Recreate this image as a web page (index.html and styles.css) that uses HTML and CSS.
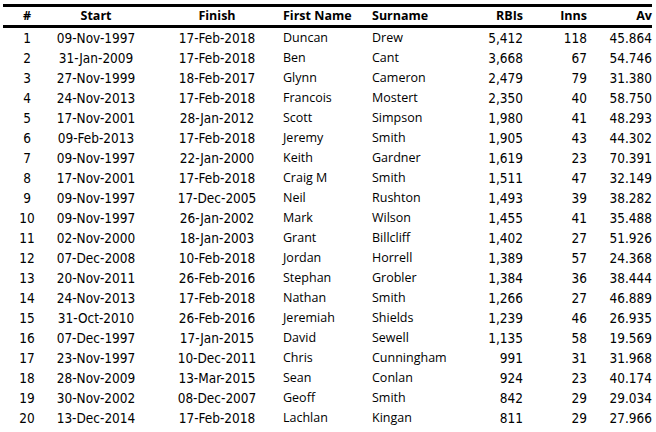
FILE: index.html
```html
<!DOCTYPE html>
<html>
<head>
<meta charset="utf-8">
<link rel="stylesheet" href="styles.css">
</head>
<body>
<table class="stats">
<colgroup>
<col class="c-rank"><col class="c-start"><col class="c-finish"><col class="c-first"><col class="c-sur"><col class="c-rbi"><col class="c-inns"><col class="c-av">
</colgroup>
<thead>
<tr><th class="ctr">#</th><th class="ctr">Start</th><th class="ctr fin">Finish</th><th class="lft">First Name</th><th class="lft">Surname</th><th class="rgt">RBIs</th><th class="rgt">Inns</th><th class="rgt last">Av</th></tr>
</thead>
<tbody>
<tr><td class="ctr num">1</td><td class="ctr num">09-Nov-1997</td><td class="ctr fin num">17-Feb-2018</td><td class="lft">Duncan</td><td class="lft">Drew</td><td class="rgt num">5,412</td><td class="rgt num">118</td><td class="rgt num last">45.864</td></tr>
<tr><td class="ctr num">2</td><td class="ctr num">31-Jan-2009</td><td class="ctr fin num">17-Feb-2018</td><td class="lft">Ben</td><td class="lft">Cant</td><td class="rgt num">3,668</td><td class="rgt num">67</td><td class="rgt num last">54.746</td></tr>
<tr><td class="ctr num">3</td><td class="ctr num">27-Nov-1999</td><td class="ctr fin num">18-Feb-2017</td><td class="lft">Glynn</td><td class="lft">Cameron</td><td class="rgt num">2,479</td><td class="rgt num">79</td><td class="rgt num last">31.380</td></tr>
<tr><td class="ctr num">4</td><td class="ctr num">24-Nov-2013</td><td class="ctr fin num">17-Feb-2018</td><td class="lft">Francois</td><td class="lft">Mostert</td><td class="rgt num">2,350</td><td class="rgt num">40</td><td class="rgt num last">58.750</td></tr>
<tr><td class="ctr num">5</td><td class="ctr num">17-Nov-2001</td><td class="ctr fin num">28-Jan-2012</td><td class="lft">Scott</td><td class="lft">Simpson</td><td class="rgt num">1,980</td><td class="rgt num">41</td><td class="rgt num last">48.293</td></tr>
<tr><td class="ctr num">6</td><td class="ctr num">09-Feb-2013</td><td class="ctr fin num">17-Feb-2018</td><td class="lft">Jeremy</td><td class="lft">Smith</td><td class="rgt num">1,905</td><td class="rgt num">43</td><td class="rgt num last">44.302</td></tr>
<tr><td class="ctr num">7</td><td class="ctr num">09-Nov-1997</td><td class="ctr fin num">22-Jan-2000</td><td class="lft">Keith</td><td class="lft">Gardner</td><td class="rgt num">1,619</td><td class="rgt num">23</td><td class="rgt num last">70.391</td></tr>
<tr><td class="ctr num">8</td><td class="ctr num">17-Nov-2001</td><td class="ctr fin num">17-Feb-2018</td><td class="lft">Craig M</td><td class="lft">Smith</td><td class="rgt num">1,511</td><td class="rgt num">47</td><td class="rgt num last">32.149</td></tr>
<tr><td class="ctr num">9</td><td class="ctr num">09-Nov-1997</td><td class="ctr fin num">17-Dec-2005</td><td class="lft">Neil</td><td class="lft">Rushton</td><td class="rgt num">1,493</td><td class="rgt num">39</td><td class="rgt num last">38.282</td></tr>
<tr><td class="ctr num">10</td><td class="ctr num">09-Nov-1997</td><td class="ctr fin num">26-Jan-2002</td><td class="lft">Mark</td><td class="lft">Wilson</td><td class="rgt num">1,455</td><td class="rgt num">41</td><td class="rgt num last">35.488</td></tr>
<tr><td class="ctr num">11</td><td class="ctr num">02-Nov-2000</td><td class="ctr fin num">18-Jan-2003</td><td class="lft">Grant</td><td class="lft">Billcliff</td><td class="rgt num">1,402</td><td class="rgt num">27</td><td class="rgt num last">51.926</td></tr>
<tr><td class="ctr num">12</td><td class="ctr num">07-Dec-2008</td><td class="ctr fin num">10-Feb-2018</td><td class="lft">Jordan</td><td class="lft">Horrell</td><td class="rgt num">1,389</td><td class="rgt num">57</td><td class="rgt num last">24.368</td></tr>
<tr><td class="ctr num">13</td><td class="ctr num">20-Nov-2011</td><td class="ctr fin num">26-Feb-2016</td><td class="lft">Stephan</td><td class="lft">Grobler</td><td class="rgt num">1,384</td><td class="rgt num">36</td><td class="rgt num last">38.444</td></tr>
<tr><td class="ctr num">14</td><td class="ctr num">24-Nov-2013</td><td class="ctr fin num">17-Feb-2018</td><td class="lft">Nathan</td><td class="lft">Smith</td><td class="rgt num">1,266</td><td class="rgt num">27</td><td class="rgt num last">46.889</td></tr>
<tr><td class="ctr num">15</td><td class="ctr num">31-Oct-2010</td><td class="ctr fin num">26-Feb-2016</td><td class="lft">Jeremiah</td><td class="lft">Shields</td><td class="rgt num">1,239</td><td class="rgt num">46</td><td class="rgt num last">26.935</td></tr>
<tr><td class="ctr num">16</td><td class="ctr num">07-Dec-1997</td><td class="ctr fin num">17-Jan-2015</td><td class="lft">David</td><td class="lft">Sewell</td><td class="rgt num">1,135</td><td class="rgt num">58</td><td class="rgt num last">19.569</td></tr>
<tr><td class="ctr num">17</td><td class="ctr num">23-Nov-1997</td><td class="ctr fin num">10-Dec-2011</td><td class="lft">Chris</td><td class="lft">Cunningham</td><td class="rgt num">991</td><td class="rgt num">31</td><td class="rgt num last">31.968</td></tr>
<tr><td class="ctr num">18</td><td class="ctr num">28-Nov-2009</td><td class="ctr fin num">13-Mar-2015</td><td class="lft">Sean</td><td class="lft">Conlan</td><td class="rgt num">924</td><td class="rgt num">23</td><td class="rgt num last">40.174</td></tr>
<tr><td class="ctr num">19</td><td class="ctr num">30-Nov-2002</td><td class="ctr fin num">08-Dec-2007</td><td class="lft">Geoff</td><td class="lft">Smith</td><td class="rgt num">842</td><td class="rgt num">29</td><td class="rgt num last">29.034</td></tr>
<tr><td class="ctr num">20</td><td class="ctr num">13-Dec-2014</td><td class="ctr fin num">17-Feb-2018</td><td class="lft">Lachlan</td><td class="lft">Kingan</td><td class="rgt num">811</td><td class="rgt num">29</td><td class="rgt num last">27.966</td></tr>
</tbody>
</table>
</body>
</html>
```
FILE: styles.css
```css
html, body {
  margin: 0;
  padding: 0;
  background: #ffffff;
}

body {
  padding: 4px 0 0 3px;
  font-family: "Open Sans", "Liberation Sans", sans-serif;
  font-size: 12.5px;
  color: #000000;
}

.stats {
  border-collapse: separate;
  border-spacing: 0;
  table-layout: fixed;
  width: 649px;
  border-top: 3px solid #000000;
}

.c-rank { width: 48px; }
.c-start { width: 90px; }
.c-finish { width: 138px; }
.c-first { width: 89px; }
.c-sur { width: 92px; }
.c-rbi { width: 67px; }
.c-inns { width: 64px; }
.c-av { width: 61px; }

.stats th {
  height: 18px;
  line-height: 18px;
  padding: 0;
  font-weight: bold;
  font-size: 12.5px;
  border-bottom: 3px solid #000000;
  white-space: nowrap;
}

.stats td {
  height: 20px;
  line-height: 20px;
  padding: 0;
  white-space: nowrap;
}

.num {
  font-family: "Liberation Sans Narrow", "DejaVu Sans Condensed", "Liberation Sans", sans-serif;
  font-size: 13.5px;
}

.ctr { text-align: center; }
.lft { text-align: left; padding-left: 4px !important; }
.rgt { text-align: right; padding-right: 4px !important; }
.fin { padding-left: 14px !important; }
.last { padding-right: 0 !important; }
```
